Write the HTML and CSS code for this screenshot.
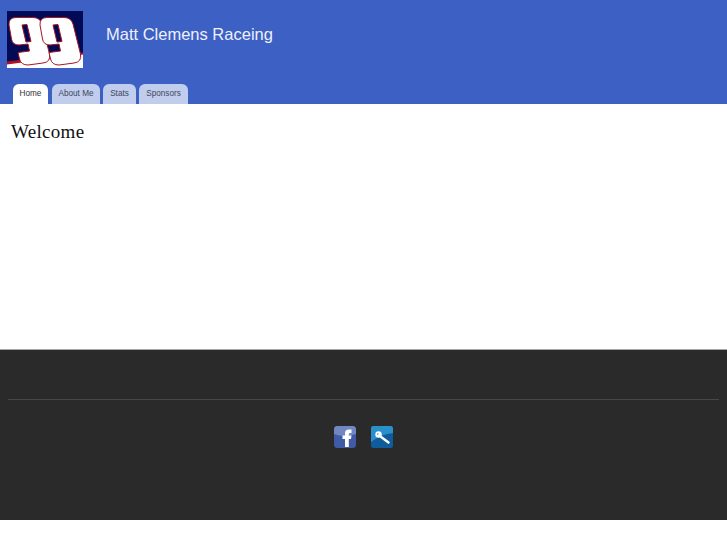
FILE: index.html
```html
<!DOCTYPE html>
<html lang="en">
<head>
<meta charset="utf-8">
<title>Matt Clemens Raceing</title>
<link rel="stylesheet" href="styles.css">
</head>
<body>
<header class="header">
  <div class="brand">
    <svg class="logo" width="76" height="57" viewBox="0 0 76 57" aria-label="99 logo">
      <rect width="76" height="57" fill="#000a55"/>
      <path d="M0 52 L76 43 V57 H0Z" fill="#fff"/>
      <path d="M0 50.500 L76 41.500 V43.500 L0 53.500Z" fill="#b01020"/>
      <g fill="#fff" stroke="#a81420" stroke-width="1" stroke-linejoin="round">
        <path fill-rule="evenodd" d="M9 6.500 L26 6.500 Q33 6.500 35 13 L42.500 43 Q44 51 36 52 L21 54 Q14 54 12.500 48 L11 41.500 L22.500 40 L21 33 L12 34 Q5.500 34 4.500 28 L2 14 Q1.500 6.500 9 6.500Z M15 14 L19 31 L24 30.500 L20 13.500Z"/>
        <path fill-rule="evenodd" d="M40 6.500 L57 6.500 Q64 6.500 66 13 L73.500 43 Q75 51 67 52 L52 54 Q45 54 43.500 48 L42 41.500 L53.500 40 L52 33 L43 34 Q36.500 34 35.500 28 L33 14 Q32.500 6.500 40 6.500Z M46 14 L50 31 L55 30.500 L51 13.500Z"/>
      </g>
    </svg>
    <h1 class="title">Matt Clemens Raceing</h1>
  </div>
  <nav class="tabs">
    <a class="tab tab-active">Home</a>
    <a class="tab tab-about">About Me</a>
    <a class="tab tab-stats">Stats</a>
    <a class="tab tab-sponsors">Sponsors</a>
  </nav>
</header>
<main class="main">
  <h2 class="welcome">Welcome</h2>
</main>
<footer class="footer">
  <hr class="rule">
  <div class="social">
    <svg width="22" height="22" viewBox="0 0 22 22" aria-label="Facebook">
      <rect width="22" height="22" rx="3.500" fill="#3f5ba6"/>
      <path d="M0 3.500 A3.500 3.500 0 0 1 3.500 0 H18.500 A3.500 3.500 0 0 1 22 3.500 V8 Q11 12 0 8Z" fill="#7088bf"/>
      <path d="M11 21 V13 H8.500 V9.500 H11 V7 Q11 3.500 15 3.500 H17.500 V7 H16 Q14.800 7 14.800 8 V9.500 H17.500 L17 13 H14.800 V21Z" fill="#fff"/>
    </svg>
    <svg width="22" height="22" viewBox="0 0 22 22" aria-label="Search">
      <rect width="22" height="22" rx="2.500" fill="#0f5c9c"/>
      <path d="M0 2.500 A2.500 2.500 0 0 1 2.500 0 H19.500 A2.500 2.500 0 0 1 22 2.500 V7 Q10 8 0 16Z" fill="#2a90cc"/>
      <circle cx="7.500" cy="8.500" r="3.200" fill="#fff"/>
      <circle cx="6.800" cy="8" r="0.800" fill="#2a90cc"/>
      <path d="M9.500 10.500 L17.500 16.500" stroke="#fff" stroke-width="2.400" stroke-linecap="round"/>
    </svg>
  </div>
</footer>
</body>
</html>
```
FILE: styles.css
```css
* { box-sizing: border-box; }
html, body { margin: 0; padding: 0; background: #fff; }
body { font-family: "Liberation Sans", Arial, sans-serif; }

.header {
  height: 104px;
  background: #3c60c4;
  display: flex;
  flex-direction: column;
}
.brand {
  display: flex;
  align-items: flex-start;
  padding: 11px 0 0 7px;
  height: 84px;
}
.logo { display: block; flex: none; }
.title {
  margin: 13px 0 0 23px;
  font-size: 16.500px;
  line-height: 21px;
  font-weight: 400;
  color: #eef1fb;
}
.tabs {
  display: flex;
  height: 20px;
  padding-left: 13px;
}
.tab {
  height: 20px;
  margin-right: 3px;
  border-radius: 6px 6px 0 0;
  background: #c0cded;
  color: #40465c;
  font-size: 8.200px;
  line-height: 19px;
  text-align: center;
}
.tab-active {
  width: 35px;
  margin-right: 4px;
  background: #fff;
  color: #333;
}
.tab-about { width: 48px; }
.tab-stats { width: 33px; }
.tab-sponsors { width: 49px; }

.main {
  height: 245px;
  background: #fff;
  padding: 16px 11px 0;
}
.welcome {
  margin: 0;
  font-family: "Liberation Serif", "Times New Roman", serif;
  font-size: 19px;
  line-height: 24px;
  font-weight: 400;
  letter-spacing: 0.300px;
  color: #111;
}

.footer {
  height: 171px;
  background: #2a2a2a;
  border-top: 1px solid #a8a8a8;
  padding: 49px 8px 0;
}
.rule {
  margin: 0;
  height: 1px;
  border: 0;
  background: #484848;
}
.social {
  display: flex;
  justify-content: center;
  gap: 15px;
  margin-top: 26px;
}
.social svg { display: block; }
```
